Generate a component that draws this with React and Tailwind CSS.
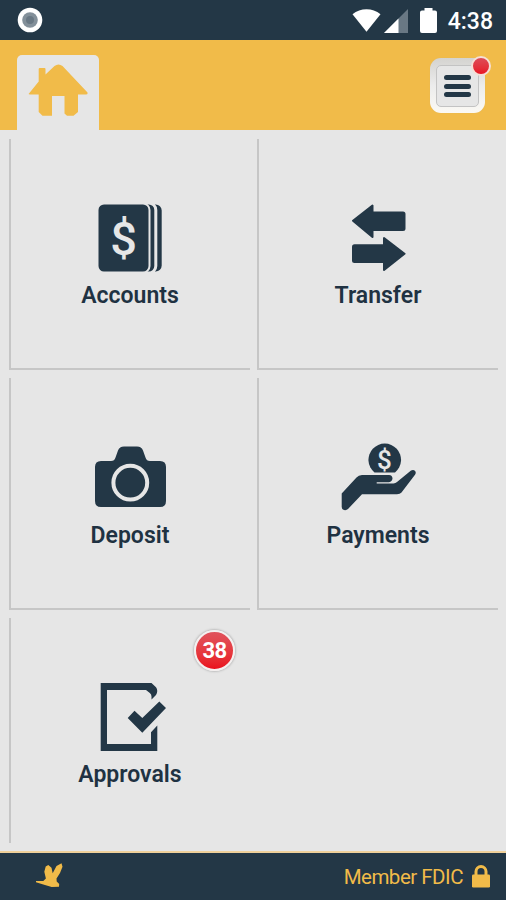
function StatusBar() {
  return (
    <div className="h-10 bg-[#233746] flex items-center justify-between pl-[17px] pr-[13px]">
      <svg className="w-[26px] h-[26px]" viewBox="0 0 26 26">
        <circle cx="13" cy="13" r="12.3" fill="#fff"/>
        <circle cx="13" cy="13" r="7.8" fill="#83909a"/>
        <circle cx="13" cy="13" r="4" fill="#697884"/>
      </svg>
      <div className="flex items-center">
        {/* wifi */}
        <svg className="w-[29px] h-6 -mt-px" viewBox="0 0 29 24">
          <path d="M.5 6.200C8.500-.4 20.500-.4 28.500 6.200L14.500 23.800Z" fill="#fff"/>
        </svg>
        {/* signal */}
        <svg className="w-6 h-6 ml-[3px] mt-px" viewBox="0 0 24 24">
          <path d="M0 24 24 0V24Z" fill="#697884"/>
          <path d="M0 24 14.500 9.500V24Z" fill="#fff"/>
        </svg>
        {/* battery */}
        <svg className="w-[17px] h-[25px] ml-[12px]" viewBox="0 0 17 25">
          <path d="M4.500 0h8v2.500H15a2 2 0 0 1 2 2V23a2 2 0 0 1-2 2H2a2 2 0 0 1-2-2V4.500a2 2 0 0 1 2-2h2.500Z" fill="#fff"/>
        </svg>
        <span className="ml-[11px] mt-[2px] text-white text-[23px] leading-none font-medium">4:38</span>
      </div>
    </div>
  );
}

function Header() {
  return (
    <header className="h-[90px] bg-[#f1bb49] flex justify-between pl-[17px] pr-[21px]">
      <div className="w-[82px] mt-[15px] bg-[#e6e6e6] rounded-t-[5px] flex justify-center pt-[8px]">
        <svg className="w-[60px] h-[54px]" viewBox="0 0 60 54">
          <path d="M1 30.500 10.700 18.500V6q0-1 1-1H16.500q1 0 1 1V11.500L26.500 3Q30.500-.2 34.500 3L59.500 29.500Q60 31.500 58 31.500H50V49L45.500 52.700H39L36.500 50.500V33H24V52.700H14.500L10.700 49V31.500H2Q0 31.500 1 30.500Z" fill="#f1bb49"/>
        </svg>
      </div>
      {/* MENU BUTTON */}
      <button className="relative w-[55px] h-[55px] mt-[18px] rounded-[11px] bg-linear-to-b from-[#d4d3d0] via-[#ececec] to-[#fbf9f4] px-[6px] pt-[7px] pb-[6px] shadow-[0_0_1px_#d8b66b]">
        <span className="flex flex-col gap-[3.400px] items-center justify-center h-full rounded-[5px] border border-[#c3c3c3] bg-[#e6e6e6]">
          <span className="w-[27px] h-[5px] rounded-full bg-[#233746]"/>
          <span className="w-[27px] h-[5px] rounded-full bg-[#233746]"/>
          <span className="w-[27px] h-[5px] rounded-full bg-[#233746]"/>
        </span>
        <span className="absolute -top-[2px] -right-[6px] w-[20px] h-[20px] rounded-full border-2 border-[#f5dfd5] bg-linear-to-b from-[#dd4a56] to-[#e80f22]"/>
      </button>
    </header>
  );
}

function AccountsIcon() {
  return (
    <svg className="w-20 h-20" viewBox="0 0 80 80">
      <g fill="#233746" stroke="#e6e6e6" strokeWidth="2">
        <rect x="21" y="3.500" width="51.700" height="69" rx="7"/>
        <rect x="15" y="3" width="50.800" height="70" rx="7" strokeWidth="3"/>
        <rect x="7.500" y="3.500" width="52" height="69" rx="6.500"/>
      </g>
      <text x="33.500" y="55" textAnchor="middle" fontSize="47" fontWeight="500" fill="#e6e6e6">$</text>
    </svg>
  );
}

function TransferIcon() {
  return (
    <svg className="w-20 h-20" viewBox="0 0 80 80">
      <g fill="#233746" stroke="#233746" strokeWidth="2" strokeLinejoin="round">
        <path d="M15 20.700 34.500 5.500V12.500H65Q66.500 12.500 66.500 14V28.500Q66.500 30 65 30H34.500V37Z"/>
        <path d="M66.500 53.700 46 38V45.300H16.500Q15 45.300 15 47V60.500Q15 62 16.500 62H46V70Z"/>
      </g>
    </svg>
  );
}

function DepositIcon() {
  return (
    <svg className="w-20 h-20" viewBox="0 1 80 80">
      <path d="M5 28Q5 22 11 22H21Q24.500 22 25.500 18.500L28 11.500Q29.500 7.500 34 7.500H47Q51.500 7.500 53 11.500L55.500 18.500Q56.500 22 60 22H70Q76 22 76 28V62Q76 68 70 68H11Q5 68 5 62Z" fill="#233746"/>
      <circle cx="40.300" cy="43.700" r="16.900" fill="none" stroke="#e6e6e6" strokeWidth="4"/>
    </svg>
  );
}

function PaymentsIcon() {
  return (
    <svg className="w-20 h-20" viewBox="0 1 80 80">
      <path d="M36.500 33.500A16.300 16.300 0 1 1 57 33.500Z" fill="#233746"/>
      <text x="46.300" y="30" textAnchor="middle" fontSize="26" fontWeight="500" fill="#e6e6e6">$</text>
      <path d="M3.700 54.500 18.500 38.500Q20.500 36 24 36H51Q54.500 36.300 54.500 39.600Q54 43 51 43.200H38.700V44.400H55.500Q57.500 44.400 59 43L73 31.500Q75.500 30 77.300 32.200Q78.300 34 77 35.700L63.500 53.500Q62 55.300 59 55.300H24L10 70Q8.500 71.500 6 71Q3.700 70.500 3.700 68Z" fill="#233746"/>
    </svg>
  );
}

function ApprovalsIcon() {
  return (
    <svg className="w-20 h-20" viewBox="0 1 80 80">
      <g fill="#233746">
        <path d="M10.700 5H61.500L66 9.300Q68.500 13 66 17L61.500 21.500V18.500Q61.500 16 59.800 15L56 12H17V66H61V54.200L67.300 47.500V73H10.700Z"/>
        <path d="M37.700 40 44.500 32.700 52.300 40 69.300 23.500 76 30 52.300 54.700Z"/>
      </g>
    </svg>
  );
}

function Tile({ label, icon, badge, className = "" }) {
  return (
    <div className={`relative flex flex-col items-center border-l-2 border-[#c6c6c6] ${className}`}>
      {/* the icon sits in the middle of the tile, left border included */}
      <div className="-ml-px flex flex-col items-center">
        {icon}
        <p className="mt-[3px] text-[23px] leading-[26px] font-semibold text-[#1f3242]">{label}</p>
      </div>
      {badge && (
        <span className="absolute top-[12px] right-[15px] w-[41px] h-[41px] rounded-full border-2 border-[#f4f0f0] bg-linear-to-b from-[#e0525c] to-[#ea0d1c] shadow-[0_0_2px_1px_#bdbdbd] flex items-center justify-center text-white text-[22px] tracking-[-0.5px] font-bold">
          {badge}
        </span>
      )}
    </div>
  );
}

function Footer() {
  return (
    <footer className="h-[49px] bg-[#233746] border-t-2 border-[#efd09a] flex items-center justify-between pl-[36px] pr-4 text-[#f1bb49]">
      <svg className="w-[27px] h-[25px] -mt-[3px]" viewBox="0 0 27 25" fill="currentColor">
        <path d="M0 18 7.300 18 9.900 15.500 8.300 8.700 9.700 3.500 12.300 2 15.500 4.700 16.700 10.300 20.500 3 25.500.3 26.500 3.700 24 10 20.500 15.500 20.700 18.500 23.200 21 23 23.800 15.700 23.900 7.300 21.500 0 19.300Z"/>
      </svg>
      <div className="flex items-center">
        <span className="mt-px text-[20.500px] leading-none tracking-[-0.5px]">Member FDIC</span>
        <svg className="w-[18px] h-[24px] ml-[9px] -mt-[2px]" viewBox="0 0 18 24">
          <path d="M4 12V7.500a5 5 0 0 1 10 0V12" fill="none" stroke="currentColor" strokeWidth="3"/>
          <rect y="10.500" width="18" height="13" rx="1.200" fill="currentColor"/>
        </svg>
      </div>
    </footer>
  );
}

function App() {
  return (
    <div className="w-[506px] h-[900px] flex flex-col overflow-hidden bg-[#e6e6e6] font-['Roboto',sans-serif]">
      <StatusBar/>
      <Header/>
      <main className="flex-1 grid grid-cols-[241px_241px] grid-rows-[231px_232px_225px] content-start gap-x-[7px] gap-y-2 pl-[9px] pt-[9px]">
        <Tile label="Accounts" icon={<AccountsIcon/>} className="pt-[61px] border-b-2"/>
        <Tile label="Transfer" icon={<TransferIcon/>} className="pt-[61px] border-b-2"/>
        <Tile label="Deposit" icon={<DepositIcon/>} className="pt-[62px] border-b-2"/>
        <Tile label="Payments" icon={<PaymentsIcon/>} className="pt-[62px] border-b-2"/>
        <Tile label="Approvals" icon={<ApprovalsIcon/>} badge={38} className="pt-[61px]"/>
      </main>
      <Footer/>
    </div>
  );
}

export default App;
